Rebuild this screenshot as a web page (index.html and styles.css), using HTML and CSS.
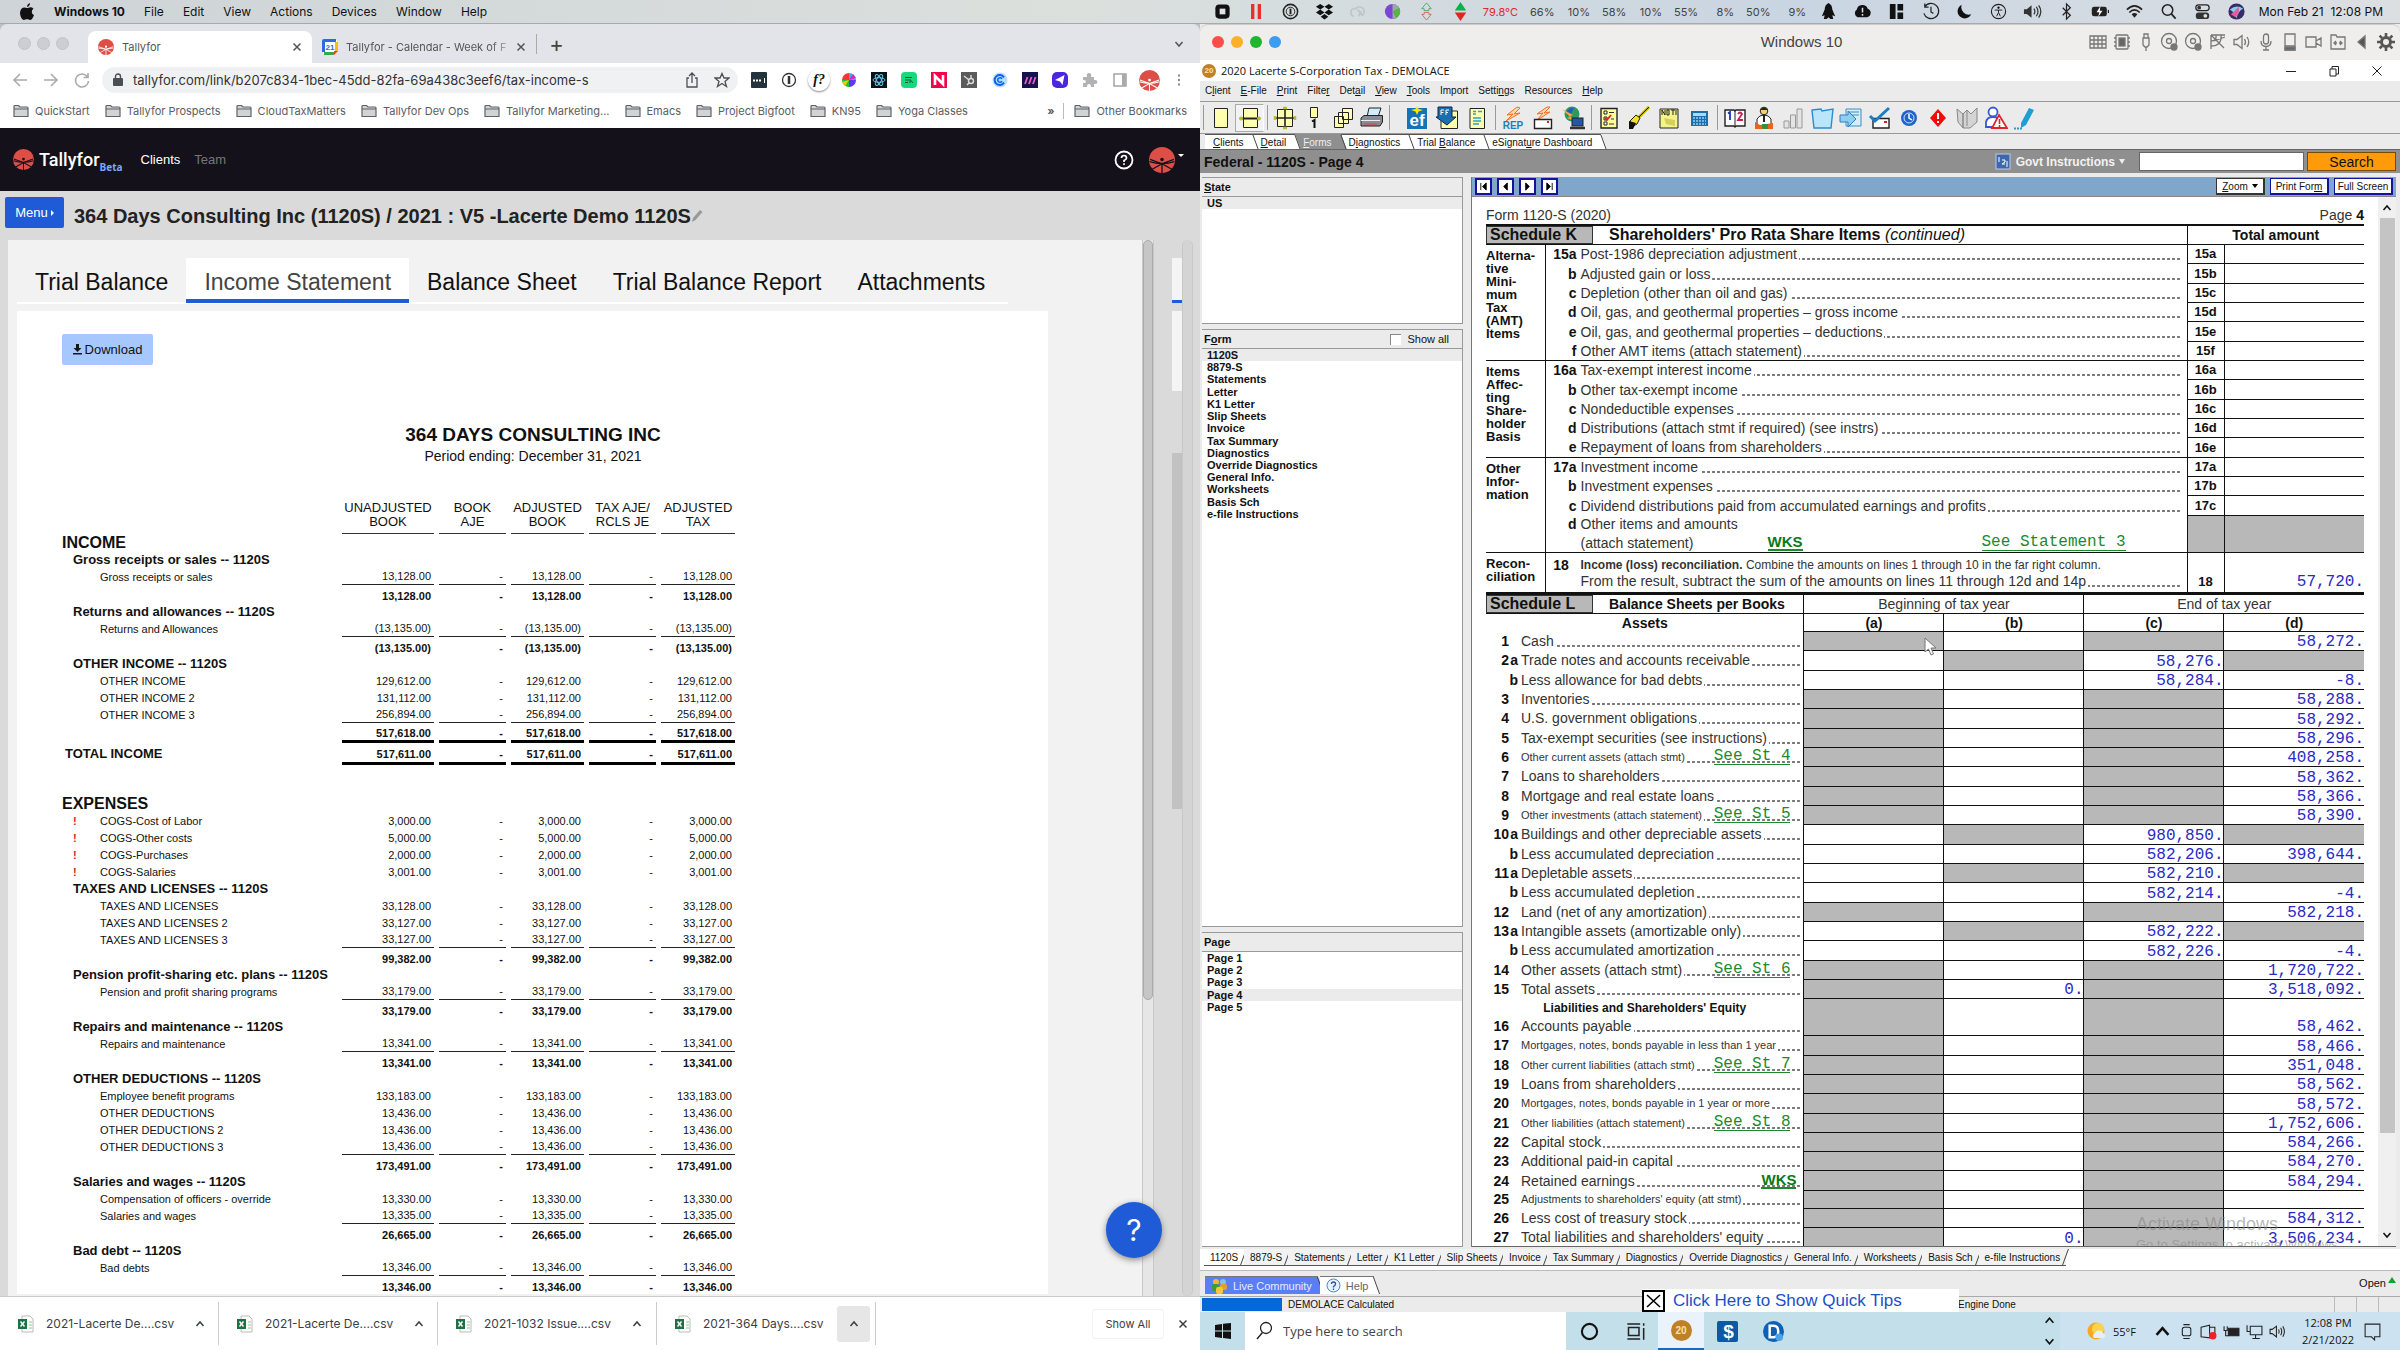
FILE: index.html
```html
<!DOCTYPE html>
<html lang="en">
<head>
<meta charset="utf-8">
<title>Tallyfor and Lacerte</title>
<link rel="stylesheet" href="styles.css">
</head>
<body>
<svg width="0" height="0" class="defs" aria-hidden="true">
  <symbol id="logo" viewBox="0 0 24 24"><circle cx="12" cy="12" r="12" fill="#dd4f46"/><circle cx="12" cy="11.500" r="1.600" fill="currentColor"/><path d="M.5 13.500Q12 17 23.500 13.500M3 20.500 12 15.500 21 20.500M12 15.500V24M1 11.500 12 15.500 23 11.500" fill="none" stroke="currentColor" stroke-width="1.200"/></symbol>
  <symbol id="folder" viewBox="0 0 16 14"><path d="M1 12.500V2.500Q1 1.500 2 1.500H5.500L7 3H14Q15 3 15 4V12.500ZM1 5H15" fill="#d2d3d5" stroke="#5f6368" stroke-width="1.200"/></symbol>
  <symbol id="x" viewBox="0 0 10 10"><path d="M1.500 1.500 8.500 8.500M8.500 1.500 1.500 8.500" stroke="currentColor" stroke-width="1.500" fill="none"/></symbol>
  <symbol id="up" viewBox="0 0 10 10"><path d="M1.500 7 5 3 8.500 7" stroke="currentColor" stroke-width="1.500" fill="none"/></symbol>
  <symbol id="down" viewBox="0 0 10 10"><path d="M1.500 3 5 7 8.500 3" stroke="currentColor" stroke-width="1.500" fill="none"/></symbol>
  <symbol id="csv" viewBox="0 0 16 18"><path d="M4 1H12L15 4V17H4Z" fill="#fff" stroke="#bbb"/><path d="M11 7h3M11 10h3M11 13h3" stroke="#8c8"/><rect y="4" width="9" height="10" fill="#1e7145"/><path d="M2.500 6.500 6.500 11.500M6.500 6.500 2.500 11.500" stroke="#fff" stroke-width="1.400"/></symbol>
  <symbol id="disc" viewBox="0 0 20 20"><circle cx="9" cy="9" r="7.500"/><circle cx="9" cy="9" r="2.500"/><circle cx="14" cy="15" r="3" fill="#777"/></symbol>
</svg>

<header class="macbar">
  <nav class="mac-menu">
    <svg width="16" height="18" viewBox="0 0 16 18"><path d="M11 0Q11 3 8 4 8 1 11 0M8 5C9 5 10 4 12 4.200 13 4.300 14 5 14.500 5.700 12 7.500 12.500 11 15 12 14 15 12.500 17 11 17 10 17 9.500 16.300 8 16.300S6 17 5 17C2.500 17 0 11 1.500 7.500 2.300 5.500 4 4.200 5.500 4.500 6.500 4.700 7.200 5 8 5" fill="#111"/></svg>
    <b>Windows 10</b><span>File</span><span>Edit</span><span>View</span><span>Actions</span><span>Devices</span><span>Window</span><span>Help</span>
  </nav>
  <div class="mac-status">
    <div class="mac-apps">
      <svg viewBox="0 0 20 20"><rect x="2.500" y="2.500" width="15" height="15" rx="4" fill="#111"/><rect x="7" y="7" width="6" height="6" fill="#dfe3e6"/></svg>
      <svg viewBox="0 0 20 20"><path d="M6 2V18M13 2V18" stroke="#e8302a" stroke-width="3.500"/></svg>
      <svg viewBox="0 0 20 20"><circle cx="10" cy="10" r="7.500" fill="none" stroke="#222" stroke-width="1.600"/><circle cx="10" cy="10" r="4.500" fill="none" stroke="#222"/><path d="M10 7V13" stroke="#222" stroke-width="2"/></svg>
      <svg viewBox="0 0 20 20"><path d="M5.500 2 10 5 5.500 8 1 5ZM14.500 2 19 5 14.500 8 10 5ZM5.500 8 10 11 5.500 14 1 11ZM14.500 8 19 11 14.500 14 10 11ZM10 12.500 14 15.500 10 18.500 6 15.500Z" fill="#111"/></svg>
      <svg viewBox="0 0 20 20"><path d="M5 15A4 4 0 1 1 7 7 5 5 0 1 1 14 14L9 8M10 15 13 10" fill="none" stroke="#bcc6cd" stroke-width="1.800"/></svg>
      <svg viewBox="0 0 20 20"><circle cx="10" cy="10" r="8" fill="#7b45d6"/><path d="M10 2A8 8 0 0 1 10 18Z" fill="#9ea6ac"/><path d="M10 10 17 6A8 8 0 0 1 14 17Z" fill="#57b447"/></svg>
      <svg viewBox="0 0 20 20"><path d="M10 1 15 7H12.500V9H7.500V7H5Z" fill="none" stroke="#55aa66"/><path d="M10 19 15 13H12.500V11H7.500V13H5Z" fill="none" stroke="#d66"/></svg>
      <svg viewBox="0 0 20 20"><path d="M10 0 16 9H4Z" fill="#0db14b"/><path d="M10 20 16 11H4Z" fill="#e5241d"/></svg>
    </div>
    <div class="mac-stats"><em>79.8°C</em><span>66%</span><span>10%</span><span>58%</span><span>10%</span><span>55%</span><span>8%</span><span>50%</span><span>9%</span></div>
    <div class="mac-sys">
      <svg viewBox="0 0 20 20"><path d="M10 1Q14 3 14 8L17 15 14 14 15 18H12L10 16 8 18H5L6 14 3 15 6 8Q6 3 10 1" fill="#111"/></svg>
      <svg viewBox="0 0 20 20"><path d="M5 16A4.500 4.500 0 0 1 4 8 6 6 0 0 1 15.500 7 4.700 4.700 0 0 1 15 16Z" fill="#111"/><path d="M10 6V11M10 12.500V14.500" stroke="#dde" stroke-width="1.600"/></svg>
      <svg viewBox="0 0 20 20"><path d="M3 2H9V18H3ZM11 2H17V9H11ZM11 11H17V18H11Z" fill="#111"/></svg>
      <svg viewBox="0 0 20 20"><path d="M4 5A8 8 0 1 1 3 12M4 1.500V5.500H8M10.500 5V10.500L13 12" fill="none" stroke="#222" stroke-width="1.300"/></svg>
      <svg viewBox="0 0 20 20"><path d="M7 3A7.500 7.500 0 1 0 17 13 8 8 0 0 1 7 3" fill="#111"/></svg>
      <svg viewBox="0 0 20 20"><circle cx="10" cy="10" r="7.500" fill="none" stroke="#222" stroke-width="1.200"/><circle cx="10" cy="6" r="1.200"/><path d="M6 8.500H14M10 8.500V11L8 15M10 11 12 15" stroke="#222" fill="none"/></svg>
      <svg viewBox="0 0 20 20"><path d="M1 7.500H4L9 3.500V16.500L4 12.500H1Z" fill="#333"/><path d="M11.500 7Q13.500 10 11.500 13M14 5Q17.500 10 14 15M16.500 3.500Q21 10 16.500 16.500" fill="none" stroke="#333" stroke-width="1.300"/></svg>
      <svg viewBox="0 0 20 20"><path d="M6 6 14 14 10 18V2L14 6 6 14" fill="none" stroke="#222" stroke-width="1.300"/></svg>
      <svg viewBox="0 0 24 20"><rect x="1" y="4" width="19" height="12" rx="3" fill="#222"/><path d="M22 8V12" stroke="#222" stroke-width="1.500"/><path d="M12 3 7 11H10.500L9 17 14.500 9H11Z" fill="#fff"/></svg>
      <svg viewBox="0 0 20 20"><path d="M2 8Q10 0 18 8M4.500 11Q10 5.500 15.500 11" fill="none" stroke="#222" stroke-width="1.700"/><path d="M7 13Q10 10 13 13L10 16.500Z" fill="#222"/></svg>
      <svg viewBox="0 0 20 20"><circle cx="9" cy="8.500" r="5.500" fill="none" stroke="#222" stroke-width="1.600"/><path d="M13 12.500 17.500 17.500" stroke="#222" stroke-width="1.800"/></svg>
      <svg viewBox="0 0 20 20"><rect x="3" y="3" width="14" height="6" rx="3" fill="none" stroke="#222" stroke-width="1.300"/><rect x="3" y="11" width="14" height="7" rx="3" fill="#333"/><circle cx="13" cy="14.500" r="2" fill="#ddd"/><circle cx="6.500" cy="6" r="2" fill="#333"/></svg>
      <svg viewBox="0 0 20 20"><circle cx="10" cy="10" r="8.500" fill="#3b2a63"/><path d="M3 8Q10 2 17 7 12 9 10 17 7 10 3 8" fill="#7fd0ee"/><path d="M4 13Q9 9 12 5 14 12 9 16Z" fill="#e85a9b"/></svg>
    </div>
    <time>Mon Feb 21&nbsp; 12:08 PM</time>
  </div>
</header>

<main class="desk">
<section class="chrome">
  <div class="tabstrip">
    <span class="light"></span><span class="light"></span><span class="light"></span>
    <div class="btab on"><svg class="fav wl" width="16" height="16"><use href="#logo"/></svg><span>Tallyfor</span><svg width="10" height="10"><use href="#x"/></svg></div>
    <div class="btab"><svg class="fav" width="16" height="16" viewBox="0 0 16 16"><path d="M1 1H15V12L12 15H1Z" fill="#fff"/><path d="M0 2Q0 0 2 0H14V3H3V13H0Z" fill="#2b6de0"/><path d="M13 3H16V12H13Z" fill="#fbbc04"/><path d="M2 13H12V16H2Z" fill="#34a853"/><path d="M12 12H16L12 16Z" fill="#ea4335"/><text x="8" y="11" text-anchor="middle" class="cal-day">21</text></svg><span class="fade">Tallyfor - Calendar - Week of F</span><svg width="10" height="10"><use href="#x"/></svg></div>
    <button class="newtab" aria-label="New tab">+</button>
    <svg class="tabsearch" width="10" height="10"><use href="#down"/></svg>
  </div>
  <div class="urlrow">
    <div class="navs">
      <svg viewBox="0 0 18 18"><path d="M16 9H3M9 3 3 9 9 15" fill="none" stroke="#a9abae" stroke-width="1.600"/></svg>
      <svg viewBox="0 0 18 18"><path d="M2 9H15M9 3 15 9 9 15" fill="none" stroke="#a9abae" stroke-width="1.600"/></svg>
      <svg viewBox="0 0 18 18"><path d="M14.500 6A6.500 6.500 0 1 0 15.500 10M15 2V6.500H10.500" fill="none" stroke="#a9abae" stroke-width="1.600"/></svg>
    </div>
    <div class="omni">
      <svg width="10" height="14" viewBox="0 0 10 14"><rect y="5" width="10" height="8" rx="1" fill="#4b4f54"/><path d="M2.500 5V3.500A2.500 2.500 0 0 1 7.500 3.500V5" fill="none" stroke="#4b4f54" stroke-width="1.400"/></svg>
      <input aria-label="Address" value="tallyfor.com/link/b207c834-1bec-45dd-82fa-69a438c3eef6/tax-income-s">
      <svg width="16" height="16" viewBox="0 0 16 16"><path d="M5 6H3V15H13V6H11M8 11V1.500M5 4 8 1 11 4" fill="none" stroke="#4b4f54" stroke-width="1.300"/></svg>
      <svg width="16" height="16" viewBox="0 0 16 16"><path d="M8 1.500 10 6H15L11 9.500 12.500 14.500 8 11.500 3.500 14.500 5 9.500 1 6H6Z" fill="none" stroke="#4b4f54" stroke-width="1.300"/></svg>
    </div>
    <div class="exts">
      <svg viewBox="0 0 16 16"><rect width="16" height="16" rx="1" fill="#22333c"/><path d="M2 8.500H10.500" stroke="#fff" stroke-width="2" stroke-dasharray="2 1"/><path d="M13.500 6V11" stroke="#fff"/></svg>
      <svg viewBox="0 0 16 16"><circle cx="8" cy="8" r="6.500" fill="none" stroke="#333" stroke-width="1.300"/><path d="M8 4V12" stroke="#333" stroke-width="2.500"/></svg>
      <i>f?</i>
      <svg viewBox="0 0 16 16"><path d="M8 8V1A7 7 0 0 1 15 8Z" fill="#2bb5f0"/><path d="M8 8H15A7 7 0 0 1 8 15Z" fill="#5a3df0"/><path d="M8 8V15A7 7 0 0 1 1 8Z" fill="#19c531"/><path d="M8 8H1A7 7 0 0 1 8 1Z" fill="#f33"/><path d="M8 8 4 14 1 10Z" fill="#f7c700"/><path d="M8 8 12 2 15 6Z" fill="#e021c8"/></svg>
      <svg viewBox="0 0 16 16"><rect width="16" height="16" fill="#0d1117"/><g fill="none" stroke="#5fc8ea"><ellipse cx="8" cy="8" rx="6" ry="2.300"/><ellipse cx="8" cy="8" rx="6" ry="2.300" transform="rotate(60 8 8)"/><ellipse cx="8" cy="8" rx="6" ry="2.300" transform="rotate(120 8 8)"/></g></svg>
      <svg viewBox="0 0 16 16"><rect width="16" height="16" rx="4" fill="#19d87c"/><path d="M4 5.500H11M4 8H8M4 10.500H7M9 7.500V11M9 7.500 12 11" stroke="#0a5b3a" fill="none"/></svg>
      <svg viewBox="0 0 16 16"><rect width="16" height="16" fill="#f2044c"/><path d="M4 13V4L12 12V3" fill="none" stroke="#fff" stroke-width="2.600"/></svg>
      <svg viewBox="0 0 16 16"><rect width="16" height="16" fill="#5b5b5b"/><circle cx="10" cy="9" r="2.500" fill="none" stroke="#ddd" stroke-width="1.400"/><path d="M10 6V3M8 8 3 4M8 11 6 13" stroke="#ddd" stroke-width="1.400"/></svg>
      <svg viewBox="0 0 16 16"><circle cx="8" cy="8" r="7.500" fill="#b9dcff"/><path d="M12 5.500A5 5 0 1 0 12 10.500" fill="none" stroke="#0a66f0" stroke-width="2"/><path d="M10 6.800A2.300 2.300 0 1 0 10 9.200" fill="none" stroke="#0a66f0" stroke-width="1.600"/></svg>
      <svg viewBox="0 0 16 16"><rect width="16" height="16" fill="#17124a"/><path d="M3 12 5.500 5M7 12 9.500 5M11 12 13.500 5" stroke="#f05ac8" stroke-width="1.800"/></svg>
      <svg viewBox="0 0 16 16"><rect width="16" height="16" rx="5" fill="#4b25e0"/><path d="M12.500 3 3 8 8 9.500 10.500 13Z" fill="#fff"/></svg>
      <svg viewBox="0 0 16 16"><path d="M1 5H5Q4 1 7 1T9 5H12V8Q15.500 7.500 15.500 10T12 12V15H9Q9 12 7 12T5 15H1V11Q4 11.500 4 9.500T1 8Z" fill="#b0b2b5"/></svg>
      <svg viewBox="0 0 16 16"><rect x="2" y="2" width="12" height="12" fill="#fff" stroke="#aaa" stroke-width="1.600"/><path d="M10 2H14V14H10Z" fill="#aaa"/></svg>
      <svg class="me wl" viewBox="0 0 24 24"><use href="#logo"/></svg>
      <svg viewBox="0 0 16 16"><path d="M8 2.500V4.500M8 7V9M8 11.500V13.500" stroke="#888" stroke-width="2"/></svg>
    </div>
  </div>
  <nav class="marks">
    <a href="#"><svg><use href="#folder"/></svg>QuickStart</a><a href="#"><svg><use href="#folder"/></svg>Tallyfor Prospects</a><a href="#"><svg><use href="#folder"/></svg>CloudTaxMatters</a><a href="#"><svg><use href="#folder"/></svg>Tallyfor Dev Ops</a><a href="#"><svg><use href="#folder"/></svg>Tallyfor Marketing...</a><a href="#"><svg><use href="#folder"/></svg>Emacs</a><a href="#"><svg><use href="#folder"/></svg>Project Bigfoot</a><a href="#"><svg><use href="#folder"/></svg>KN95</a><a href="#"><svg><use href="#folder"/></svg>Yoga Classes</a>
    <b>»</b><a class="other" href="#"><svg><use href="#folder"/></svg>Other Bookmarks</a>
  </nav>

  <div class="apphead">
    <svg width="21" height="21"><use href="#logo"/></svg>
    <strong>Tallyfor</strong><sub>Beta</sub>
    <a class="lit" href="#">Clients</a><a href="#">Team</a>
    <svg class="q" width="20" height="20" viewBox="0 0 20 20"><circle cx="10" cy="10" r="8.500" fill="none" stroke="#fff" stroke-width="1.800"/><path d="M7.500 8Q7.500 5.500 10 5.500T12.500 8Q12.500 9.500 10 10.500V12M10 13.300V15" fill="none" stroke="#fff" stroke-width="1.700"/></svg>
    <svg width="26" height="26"><use href="#logo"/></svg><i class="caret"></i>
  </div>

  <div class="titlebar">
    <button class="menu">Menu<i></i></button>
    <h1>364 Days Consulting Inc (1120S) / 2021 : V5 -Lacerte Demo 1120S</h1>
    <svg width="12" height="14" viewBox="0 0 12 14"><path d="M1 13 2 9 9 1 11.500 3 4.500 11Z" fill="#999"/></svg>
  </div>

  <div class="appbody">
    <div class="panel">
      <nav class="ptabs"><a href="#">Trial Balance</a><a href="#" class="on">Income Statement</a><a href="#">Balance Sheet</a><a href="#">Trial Balance Report</a><a href="#">Attachments</a></nav>
      <div class="paper">
        <button class="download"><svg width="9" height="11" viewBox="0 0 9 11"><path d="M3 0H6V4H8.500L4.500 8 .5 4H3ZM0 9H9V10.500H0Z" fill="#161616"/></svg>Download</button>
        <h2>364 DAYS CONSULTING INC</h2>
        <p>Period ending: December 31, 2021</p>
        <table class="income">
          <colgroup><col class="c0"><col class="c1"><col class="c2"><col class="c3"><col class="c2"><col class="c4"></colgroup>
          <thead><tr><td></td><th>UNADJUSTED<br>BOOK</th><th>BOOK<br>AJE</th><th>ADJUSTED<br>BOOK</th><th>TAX AJE/<br>RCLS JE</th><th>ADJUSTED<br>TAX</th></tr></thead>
          <tbody>
          <tr class="big"><th colspan="6">INCOME</th></tr>
          <tr class="h"><th colspan="6">Gross receipts or sales -- 1120S</th></tr>
          <tr class="e"><th>Gross receipts or sales</th><td>13,128.00</td><td>-</td><td>13,128.00</td><td>-</td><td>13,128.00</td></tr>
          <tr class="s"><th></th><td>13,128.00</td><td>-</td><td>13,128.00</td><td>-</td><td>13,128.00</td></tr>
          <tr class="h"><th colspan="6">Returns and allowances -- 1120S</th></tr>
          <tr class="e"><th>Returns and Allowances</th><td>(13,135.00)</td><td>-</td><td>(13,135.00)</td><td>-</td><td>(13,135.00)</td></tr>
          <tr class="s"><th></th><td>(13,135.00)</td><td>-</td><td>(13,135.00)</td><td>-</td><td>(13,135.00)</td></tr>
          <tr class="h"><th colspan="6">OTHER INCOME -- 1120S</th></tr>
          <tr><th>OTHER INCOME</th><td>129,612.00</td><td>-</td><td>129,612.00</td><td>-</td><td>129,612.00</td></tr>
          <tr><th>OTHER INCOME 2</th><td>131,112.00</td><td>-</td><td>131,112.00</td><td>-</td><td>131,112.00</td></tr>
          <tr class="e"><th>OTHER INCOME 3</th><td>256,894.00</td><td>-</td><td>256,894.00</td><td>-</td><td>256,894.00</td></tr>
          <tr class="s dbl"><th></th><td>517,618.00</td><td>-</td><td>517,618.00</td><td>-</td><td>517,618.00</td></tr>
          <tr class="s dbl tot"><th>TOTAL INCOME</th><td>517,611.00</td><td>-</td><td>517,611.00</td><td>-</td><td>517,611.00</td></tr>
          <tr class="gap"><td colspan="6"></td></tr>
          <tr class="big"><th colspan="6">EXPENSES</th></tr>
          <tr class="w"><th>COGS-Cost of Labor</th><td>3,000.00</td><td>-</td><td>3,000.00</td><td>-</td><td>3,000.00</td></tr>
          <tr class="w"><th>COGS-Other costs</th><td>5,000.00</td><td>-</td><td>5,000.00</td><td>-</td><td>5,000.00</td></tr>
          <tr class="w"><th>COGS-Purchases</th><td>2,000.00</td><td>-</td><td>2,000.00</td><td>-</td><td>2,000.00</td></tr>
          <tr class="w"><th>COGS-Salaries</th><td>3,001.00</td><td>-</td><td>3,001.00</td><td>-</td><td>3,001.00</td></tr>
          <tr class="h"><th colspan="6">TAXES AND LICENSES -- 1120S</th></tr>
          <tr><th>TAXES AND LICENSES</th><td>33,128.00</td><td>-</td><td>33,128.00</td><td>-</td><td>33,128.00</td></tr>
          <tr><th>TAXES AND LICENSES 2</th><td>33,127.00</td><td>-</td><td>33,127.00</td><td>-</td><td>33,127.00</td></tr>
          <tr class="e"><th>TAXES AND LICENSES 3</th><td>33,127.00</td><td>-</td><td>33,127.00</td><td>-</td><td>33,127.00</td></tr>
          <tr class="s"><th></th><td>99,382.00</td><td>-</td><td>99,382.00</td><td>-</td><td>99,382.00</td></tr>
          <tr class="h"><th colspan="6">Pension profit-sharing etc. plans -- 1120S</th></tr>
          <tr class="e"><th>Pension and profit sharing programs</th><td>33,179.00</td><td>-</td><td>33,179.00</td><td>-</td><td>33,179.00</td></tr>
          <tr class="s"><th></th><td>33,179.00</td><td>-</td><td>33,179.00</td><td>-</td><td>33,179.00</td></tr>
          <tr class="h"><th colspan="6">Repairs and maintenance -- 1120S</th></tr>
          <tr class="e"><th>Repairs and maintenance</th><td>13,341.00</td><td>-</td><td>13,341.00</td><td>-</td><td>13,341.00</td></tr>
          <tr class="s"><th></th><td>13,341.00</td><td>-</td><td>13,341.00</td><td>-</td><td>13,341.00</td></tr>
          <tr class="h"><th colspan="6">OTHER DEDUCTIONS -- 1120S</th></tr>
          <tr><th>Employee benefit programs</th><td>133,183.00</td><td>-</td><td>133,183.00</td><td>-</td><td>133,183.00</td></tr>
          <tr><th>OTHER DEDUCTIONS</th><td>13,436.00</td><td>-</td><td>13,436.00</td><td>-</td><td>13,436.00</td></tr>
          <tr><th>OTHER DEDUCTIONS 2</th><td>13,436.00</td><td>-</td><td>13,436.00</td><td>-</td><td>13,436.00</td></tr>
          <tr class="e"><th>OTHER DEDUCTIONS 3</th><td>13,436.00</td><td>-</td><td>13,436.00</td><td>-</td><td>13,436.00</td></tr>
          <tr class="s"><th></th><td>173,491.00</td><td>-</td><td>173,491.00</td><td>-</td><td>173,491.00</td></tr>
          <tr class="h"><th colspan="6">Salaries and wages -- 1120S</th></tr>
          <tr><th>Compensation of officers - override</th><td>13,330.00</td><td>-</td><td>13,330.00</td><td>-</td><td>13,330.00</td></tr>
          <tr class="e"><th>Salaries and wages</th><td>13,335.00</td><td>-</td><td>13,335.00</td><td>-</td><td>13,335.00</td></tr>
          <tr class="s"><th></th><td>26,665.00</td><td>-</td><td>26,665.00</td><td>-</td><td>26,665.00</td></tr>
          <tr class="h"><th colspan="6">Bad debt -- 1120S</th></tr>
          <tr class="e"><th>Bad debts</th><td>13,346.00</td><td>-</td><td>13,346.00</td><td>-</td><td>13,346.00</td></tr>
          <tr class="s"><th></th><td>13,346.00</td><td>-</td><td>13,346.00</td><td>-</td><td>13,346.00</td></tr>
          </tbody>
        </table>
      </div>
    </div>
    <div class="bar"><i></i></div>
    <div class="peek"><b></b><span></span><u></u></div>
    <div class="bar slim"></div>
    <button class="help" aria-label="Help">?</button>
  </div>

  <footer class="shelf">
    <div><svg width="16" height="18"><use href="#csv"/></svg><span>2021-Lacerte De....csv</span><button aria-label="Options"><svg width="10" height="10"><use href="#up"/></svg></button></div>
    <div><svg width="16" height="18"><use href="#csv"/></svg><span>2021-Lacerte De....csv</span><button aria-label="Options"><svg width="10" height="10"><use href="#up"/></svg></button></div>
    <div><svg width="16" height="18"><use href="#csv"/></svg><span>2021-1032 Issue....csv</span><button aria-label="Options"><svg width="10" height="10"><use href="#up"/></svg></button></div>
    <div><svg width="16" height="18"><use href="#csv"/></svg><span>2021-364 Days....csv</span><button class="on" aria-label="Options"><svg width="10" height="10"><use href="#up"/></svg></button></div>
    <button class="all">Show All</button><svg width="10" height="10"><use href="#x"/></svg>
  </footer>
</section>

<section class="vm">
  <div class="vmtitle">
    <i class="r"></i><i class="y"></i><i class="g"></i><i class="b"></i>
    <span>Windows 10</span>
    <div class="vmicons">
      <svg viewBox="0 0 20 20"><path d="M2 4H18V16H2ZM2 8H18M2 12H18M6 4V16M10 4V16M14 4V16"/></svg>
      <svg viewBox="0 0 20 20"><rect x="4" y="3" width="12" height="14" rx="1"/><rect x="7" y="6" width="6" height="8" fill="#666"/><path d="M2 6H4M2 10H4M2 14H4M16 6H18M16 10H18M16 14H18"/></svg>
      <svg viewBox="0 0 20 20"><path d="M8 2H12V6H8ZM7 6H13V13L11 15H9L7 13ZM10 15V19"/></svg>
      <svg><use href="#disc"/></svg><svg><use href="#disc"/></svg>
      <svg viewBox="0 0 20 20"><path d="M3 3H17M3 3V17M3 3 16 16M8 3Q9 9 3 9M13 3Q14 14 3 14M17 5 6 9"/></svg>
      <svg viewBox="0 0 20 20"><path d="M2 7.500H5L10 3.500V16.500L5 12.500H2ZM12.500 7Q14.500 10 12.500 13M15 5Q18.500 10 15 15"/></svg>
      <svg viewBox="0 0 20 20"><rect x="7.500" y="2" width="5" height="10" rx="2.500"/><path d="M5 9Q5 14.500 10 14.500T15 9M10 15V18M7 18H13"/></svg>
      <svg viewBox="0 0 20 20"><path d="M5 2H15V18H5ZM5 14H15"/><path d="M5 15H15V18H5Z" fill="#666"/></svg>
      <svg viewBox="0 0 20 20"><path d="M2 5H12V15H2ZM12 9 17 6V14L12 11"/></svg>
      <svg viewBox="0 0 20 20"><path d="M3 17V3H8L9 5H17V17ZM6 11H9M11 11H14M8 9 6 11 8 13M12 9 14 11 12 13"/></svg>
      <svg viewBox="0 0 20 20"><path d="M13 4V16L6 10Z" fill="#555"/></svg>
      <svg viewBox="0 0 20 20"><circle cx="10" cy="10" r="4.500" stroke-width="3" stroke="#555"/><path d="M10 1V5M10 15V19M1 10H5M15 10H19M3.600 3.600 6 6M14 14 16.400 16.400M3.600 16.400 6 14M14 6 16.400 3.600" stroke-width="2.600" stroke="#555"/></svg>
    </div>
  </div>
  <div class="wtitle">
    <b class="coin">20</b><span>2020 Lacerte S-Corporation Tax - DEMOLACE</span>
    <div><svg viewBox="0 0 12 12"><path d="M1 6.500H11"/></svg><svg viewBox="0 0 12 12"><path d="M2 4H8V11H2ZM4 4V1.500H10.500V9H8"/></svg><svg viewBox="0 0 12 12"><path d="M1.500 1.500 10.500 10.500M10.500 1.500 1.500 10.500"/></svg></div>
  </div>
  <nav class="wmenu"><a href="#">C<u>l</u>ient</a><a href="#"><u>E</u>-File</a><a href="#"><u>P</u>rint</a><a href="#">Filte<u>r</u></a><a href="#">Det<u>a</u>il</a><a href="#"><u>V</u>iew</a><a href="#"><u>T</u>ools</a><a href="#">Import</a><a href="#">Setti<u>n</u>gs</a><a href="#">Resources</a><a href="#"><u>H</u>elp</a></nav>
  <div class="wtools">
    <span></span>
    <button aria-label="Page"><svg viewBox="0 0 24 24"><path d="M5.500 2.500H18.500V21.500H5.500Z" fill="#ffffb0" stroke="#222"/></svg></button>
    <button class="on" aria-label="Split"><svg viewBox="0 0 24 24"><path d="M5.500 2.500H19.500V21.500H5.500Z" fill="#ffffb0" stroke="#222"/><path d="M3 12.500H22" stroke="#222" stroke-width="2"/><circle cx="3" cy="12.500" r="2" fill="#bb3"/><circle cx="21" cy="12.500" r="2" fill="#bb3"/></svg></button>
    <span></span>
    <button aria-label="Quad"><svg viewBox="0 0 24 24"><path d="M4.500 3.500H19.500V20.500H4.500Z" fill="#ffffb0" stroke="#222"/><path d="M2 12H22M12 2V22" stroke="#222" stroke-width="1.600"/><path d="M10 2H14M10 22H14M2 10V14M22 10V14" stroke="#bb3" stroke-width="2.500"/></svg></button>
    <button aria-label="Single"><svg viewBox="0 0 24 24"><path d="M8.500 1.500H15.500V11.500H8.500Z" fill="#ffffb0" stroke="#222"/><path d="M10 15.500 12.500 14V22" fill="none" stroke="#111" stroke-width="2"/></svg></button>
    <button aria-label="Stack"><svg viewBox="0 0 24 24" fill="#ffffb0" stroke="#222"><path d="M11.500 2.500H21.500V13.500H11.500ZM7.500 6.500H17.500V17.500H7.500ZM3.500 10.500H12.500V21.500H3.500Z"/></svg></button>
    <button aria-label="Print"><svg viewBox="0 0 24 24"><path d="M7 11 9 2H21L18 11Z" fill="#cfeefc" stroke="#222"/><path d="M1 12 4 9.500H22.500V16L20 20H1Z" fill="#8b8b98" stroke="#222"/><path d="M1 14.500H20" stroke="#eee"/><path d="M4 18H17" stroke="#c55" stroke-width="1.500"/></svg></button>
    <span class="wide"></span>
    <button aria-label="E-file"><svg viewBox="0 0 24 24"><rect x="2" y="2" width="20" height="21" fill="#1473b8"/><path d="M12 0 13.500 3 18 4 13.500 5.500 12 9 10.500 5.500 6 4 10.500 3Z" fill="#ffe600"/><text x="12" y="20" text-anchor="middle" class="ef">ef</text></svg></button>
    <button aria-label="EF import"><svg viewBox="0 0 24 24"><path d="M12 5H22.500V22.500H6V15" fill="#ffffb0" stroke="#222"/><path d="M3 1H17V11H21L12 19 1 11H3Z" fill="#1b6fae" stroke="#124"/><path d="M6 4H9M6 4V9M6 6.500H8.500M11 4H14M11 4V9M11 6.500H13" stroke="#fff" fill="none"/></svg></button>
    <button aria-label="EF list"><svg viewBox="0 0 24 24"><path d="M5 2.500H19.500V22.500H5Z" fill="#ffffb0" stroke="#222"/><path d="M8 5.500H11M8 8H11M13 5.500H17M8 12H16M8 15H16M8 18H14" stroke="#2aa2cc" stroke-width="1.600"/></svg></button>
    <span></span>
    <button aria-label="Rep"><svg viewBox="0 0 24 24"><path d="M16 1 6 9 12 8 5 15 19 7 13 8 19 2Z" fill="#ffd9a8" stroke="#f0702a"/><text x="12" y="23" text-anchor="middle" class="rep">REP</text></svg></button>
    <button aria-label="Send"><svg viewBox="0 0 24 24"><path d="M16 1 6 8 12 7 6 14 19 6 13 7 19 1Z" fill="#ffd9a8" stroke="#f0702a"/><path d="M3.500 13.500H20.500V22.500H3.500Z" fill="#fff" stroke="#222" stroke-width="1.400"/><path d="M16 16H18" stroke="#c22" stroke-width="2"/></svg></button>
    <button aria-label="Online"><svg viewBox="0 0 24 24"><circle cx="11" cy="8" r="7.500" fill="#2c9a5e"/><path d="M6 5Q9 1 13 2L10 8 6 10Z" fill="#1c62b4"/><path d="M1 3 12 9 9 10 16 16 6 12 9 11Z" fill="#ffa43a"/><rect x="11" y="12" width="11" height="8" fill="#2456a8" stroke="#222"/><path d="M9 22H24" stroke="#333" stroke-width="2.500"/></svg></button>
    <span></span>
    <button aria-label="Checklist"><svg viewBox="0 0 24 24"><path d="M4 2.500H20V22H4Z" fill="#ffff9a" stroke="#222" stroke-width="1.400"/><path d="M7 5H10V8H7ZM7 11H10V14H7ZM7 16H10V19H7Z" fill="#fff" stroke="#222"/><path d="M8 12 10 14 14 9" stroke="#d22" fill="none" stroke-width="1.800"/><path d="M12 6.500H17M14 13H17M12 18H17" stroke="#333"/></svg></button>
    <button aria-label="Sign"><svg viewBox="0 0 24 24"><path d="M22 1 10 13" stroke="#c8b400" stroke-width="3"/><path d="M22 1 10 13" stroke="#222"/><path d="M3 22V15L9 9 13 12 10 18Z" fill="#f4e02a" stroke="#222"/><path d="M2 15 9 17 6 23H2Z" fill="#111"/></svg></button>
    <button aria-label="Notes"><svg viewBox="0 0 24 24"><path d="M3 3H21V22H3Z" fill="#f4f48a" stroke="#222"/><path d="M5 9V4L8 9V4M10 4H12V9H10ZM14 4H18M16 4V9M19 4V9" stroke="#222" fill="none"/><path d="M7 12 18 14V20L9 18Z" fill="#d6cf5a"/></svg></button>
    <button aria-label="Calculator"><svg viewBox="0 0 24 24"><rect x="4" y="5" width="17" height="15" fill="#1c6fa8"/><rect x="6" y="7" width="13" height="3" fill="#9fe0ff"/><path d="M6 12H19M6 15H19M6 18H19" stroke="#8fd0f4" stroke-dasharray="2 1" stroke-width="1.500"/></svg></button>
    <span class="last"></span>
    <button aria-label="Compare"><svg viewBox="0 0 24 24"><path d="M2 4H11L12 5 13 4H22V20H13L12 21 11 20H2Z" fill="#fff" stroke="#222" stroke-width="1.400"/><path d="M12 5V20" stroke="#222"/><path d="M5 7.500 7 6V14" fill="none" stroke="#1736b8" stroke-width="1.800"/><path d="M15 8Q17 5 19 8L15 14H20" fill="none" stroke="#c81e50" stroke-width="1.800"/></svg></button>
    <button aria-label="Advisor"><svg viewBox="0 0 24 24"><circle cx="12" cy="5" r="3.800" fill="#f3cf7a" stroke="#222"/><path d="M8 4Q12-1 16 4Z" fill="#222"/><path d="M5 22V13Q7 9 12 9T19 13V22Z" fill="#fff" stroke="#222"/><path d="M12 9V16" stroke="#222" stroke-width="2"/><path d="M3 16 8 19 21 17V23H3Z" fill="#e8641f"/><path d="M10 18H16V23H10Z" fill="#3a8f3a"/></svg></button>
    <button aria-label="Chart"><svg viewBox="0 0 24 24" fill="#e4e4e4" stroke="#999"><path d="M3 15H8V22H3ZM9.500 9H14.500V22H9.500ZM16 3H21V22H16Z"/></svg></button>
    <button aria-label="Folder"><svg viewBox="0 0 24 24"><path d="M2 4 11 3 12 5 23 3 21 22H4Z" fill="#b9e6fb" stroke="#2f8cc8" stroke-width="1.400"/></svg></button>
    <button aria-label="Move"><svg viewBox="0 0 24 24"><path d="M7 3H22V20H7Z" fill="#d6ecfa" stroke="#3c8ec4"/><path d="M10 6H20M10 9H20" stroke="#3c8ec4"/><path d="M1 9H9V5L17 13 9 21V16H1Z" fill="#8fcdf2" stroke="#2f7fc0"/></svg></button>
    <button aria-label="Mail check"><svg viewBox="0 0 24 24"><path d="M5 12.500H21V22H5Z" fill="#fff" stroke="#222" stroke-width="1.400"/><path d="M16 16H19" stroke="#c22" stroke-width="2"/><path d="M2 10 7 15 21 2" fill="none" stroke="#1b7fc4" stroke-width="3"/></svg></button>
    <button aria-label="History"><svg viewBox="0 0 24 24"><circle cx="12" cy="12" r="8" fill="#1f64c8"/><circle cx="12" cy="12" r="5" fill="none" stroke="#cfe2ff"/><path d="M12 8V12L15 14" stroke="#fff" fill="none" stroke-width="1.500"/></svg></button>
    <button aria-label="Alert"><svg viewBox="0 0 24 24"><path d="M12 3 20 12 12 21 4 12Z" fill="#f30b0b"/><path d="M12 7V13M12 15V17" stroke="#fff" stroke-width="2"/></svg></button>
    <button aria-label="Letter"><svg viewBox="0 0 24 24" fill="#d4d4d4" stroke="#888"><path d="M2 3 8 8V22L3 16ZM8 8 12 4 16 8 22 2V16L15 22H8ZM12 4V20"/></svg></button>
    <button aria-label="User alert"><svg viewBox="0 0 24 24" fill="#fff"><circle cx="9" cy="6" r="4.500" stroke="#3a56d8" stroke-width="1.800"/><path d="M2 21V16Q3 11 9 11T15 15V21Z" stroke="#3a56d8" stroke-width="1.800"/><path d="M15 9 23 22H8Z" stroke="#e0252a" stroke-width="1.800"/><path d="M15.500 13V18M15.500 19V21" stroke="#e0252a" stroke-width="1.600"/></svg></button>
    <button aria-label="Edit"><svg viewBox="0 0 24 24"><path d="M8 17 16 2 21 4 13 19 8 22Z" fill="#1d9fd6"/><path d="M1 22.500H9" stroke="#1d9fd6" stroke-width="2" stroke-dasharray="2 1"/></svg></button>
  </div>
  <nav class="wtabs"><a href="#"><u>C</u>lients</a><a href="#"><u>D</u>etail</a><a href="#" class="on"><u>F</u>orms</a><a href="#">D<u>i</u>agnostics</a><a href="#">Trial <u>B</u>alance</a><a href="#">eSignat<u>u</u>re Dashboard</a></nav>
  <div class="band">
    <h3>Federal - 1120S - Page 4</h3>
    <svg width="16" height="17" viewBox="0 0 16 17"><rect x="1" y="1" width="14" height="15" fill="#3f68ac" stroke="#b9cbe8"/><path d="M4 4V9M7 7H10V9L7 11H10M12 8V14" stroke="#fff" fill="none"/></svg>
    <b>Govt Instructions</b><i></i>
    <input aria-label="Search forms"><button>Search</button>
  </div>
  <div class="work">
    <aside>
      <section class="state"><h4><u>S</u>tate</h4><ul><li class="on">US</li></ul></section>
      <section class="forms"><h4>F<u>o</u>rm <label><input type="checkbox">Show all</label></h4>
        <ul><li class="on">1120S</li><li>8879-S</li><li>Statements</li><li>Letter</li><li>K1 Letter</li><li>Slip Sheets</li><li>Invoice</li><li>Tax Summary</li><li>Diagnostics</li><li>Override Diagnostics</li><li>General Info.</li><li>Worksheets</li><li>Basis Sch</li><li>e-file Instructions</li></ul></section>
      <section class="pages"><h4>Page</h4><ul><li>Page 1</li><li>Page 2</li><li>Page 3</li><li class="on">Page 4</li><li>Page 5</li></ul></section>
    </aside>
    <div class="viewer">
      <div class="vbar">
        <button aria-label="First"><svg viewBox="0 0 10 10"><path d="M2 1V9M8 1V9L4 5Z"/></svg></button><button aria-label="Previous"><svg viewBox="0 0 10 10"><path d="M7 1V9L3 5Z"/></svg></button><button aria-label="Next"><svg viewBox="0 0 10 10"><path d="M3 1V9L7 5Z"/></svg></button><button aria-label="Last"><svg viewBox="0 0 10 10"><path d="M8 1V9M2 1V9L6 5Z"/></svg></button>
        <button class="txt first"><u>Z</u>oom<i></i></button><button class="txt">Print For<u>m</u></button><button class="txt">Full Screen</button>
      </div>
      <div class="vscroll">
        <div class="sheet">
          <div class="formno"><span>Form 1120-S (2020)</span><span>Page <b>4</b></span></div>
          <table class="sk">
            <colgroup><col class="k1"><col><col class="k3"><col class="k4"></colgroup>
            <thead><tr><th colspan="2"><div><b class="tag">Schedule K</b><span>Shareholders' Pro Rata Share Items <i>(continued)</i></span></div></th><th colspan="2" class="ta">Total amount</th></tr></thead>
            <tbody>
            <tr><th rowspan="6">Alterna-<br>tive<br>Mini-<br>mum<br>Tax<br>(AMT)<br>Items</th><td class="l"><b>15a</b><div><span>Post-1986 depreciation adjustment</span></div></td><th>15a</th><td></td></tr>
            <tr><td class="l"><b>b</b><div><span>Adjusted gain or loss</span></div></td><th>15b</th><td></td></tr>
            <tr><td class="l"><b>c</b><div><span>Depletion (other than oil and gas)</span></div></td><th>15c</th><td></td></tr>
            <tr><td class="l"><b>d</b><div><span>Oil, gas, and geothermal properties – gross income</span></div></td><th>15d</th><td></td></tr>
            <tr><td class="l"><b>e</b><div><span>Oil, gas, and geothermal properties – deductions</span></div></td><th>15e</th><td></td></tr>
            <tr class="end"><td class="l"><b>f</b><div><span>Other AMT items (attach statement)</span></div></td><th>15f</th><td></td></tr>
            <tr><th rowspan="5">Items<br>Affec-<br>ting<br>Share-<br>holder<br>Basis</th><td class="l"><b>16a</b><div><span>Tax-exempt interest income</span></div></td><th>16a</th><td></td></tr>
            <tr><td class="l"><b>b</b><div><span>Other tax-exempt income</span></div></td><th>16b</th><td></td></tr>
            <tr><td class="l"><b>c</b><div><span>Nondeductible expenses</span></div></td><th>16c</th><td></td></tr>
            <tr><td class="l"><b>d</b><div><span>Distributions (attach stmt if required) (see instrs)</span></div></td><th>16d</th><td></td></tr>
            <tr class="end"><td class="l"><b>e</b><div><span>Repayment of loans from shareholders</span></div></td><th>16e</th><td></td></tr>
            <tr><th rowspan="5">Other<br>Infor-<br>mation</th><td class="l"><b>17a</b><div><span>Investment income</span></div></td><th>17a</th><td></td></tr>
            <tr><td class="l"><b>b</b><div><span>Investment expenses</span></div></td><th>17b</th><td></td></tr>
            <tr><td class="l"><b>c</b><div><span>Dividend distributions paid from accumulated earnings and profits</span></div></td><th>17c</th><td></td></tr>
            <tr><td class="l"><b>d</b><div class="nd"><span>Other items and amounts</span></div></td><th class="g" rowspan="2"></th><td class="g" rowspan="2"></td></tr>
            <tr class="end"><td class="l"><b></b><div class="nd three"><span>(attach statement)</span><a class="wks" href="#">WKS</a><a href="#">See Statement 3</a></div></td></tr>
            <tr class="rec end"><th>Recon-<br>ciliation</th><td class="l"><b>18&nbsp;&nbsp;</b><section><p><strong>Income (loss) reconciliation.</strong> Combine the amounts on lines 1 through 10 in the far right column.</p><div><span>From the result, subtract the sum of the amounts on lines 11 through 12d and 14p</span></div></section></td><th>18</th><td>57,720.</td></tr>
            </tbody>
          </table>
          <table class="sl">
            <colgroup><col class="n"><col><col class="v"><col class="v"><col class="v"><col class="v"></colgroup>
            <thead><tr><th colspan="2"><div><b class="tag">Schedule L</b><span>Balance Sheets per Books</span></div></th><td colspan="2">Beginning of tax year</td><td colspan="2">End of tax year</td></tr>
            <tr><th colspan="2" class="as">Assets</th><th>(a)</th><th>(b)</th><th>(c)</th><th>(d)</th></tr></thead>
            <tbody>
            <tr><th>1<i></i></th><td class="l"><div><span>Cash</span></div></td><td class="g"></td><td></td><td class="g"></td><td>58,272.</td></tr>
            <tr><th>2<i>a</i></th><td class="l"><div><span>Trade notes and accounts receivable</span></div></td><td></td><td class="g"></td><td>58,276.</td><td class="g"></td></tr>
            <tr><th><i>b</i></th><td class="l"><div><span>Less allowance for bad debts</span></div></td><td></td><td></td><td>58,284.</td><td>-8.</td></tr>
            <tr><th>3<i></i></th><td class="l"><div><span>Inventories</span></div></td><td class="g"></td><td></td><td class="g"></td><td>58,288.</td></tr>
            <tr><th>4<i></i></th><td class="l"><div><span>U.S. government obligations</span></div></td><td class="g"></td><td></td><td class="g"></td><td>58,292.</td></tr>
            <tr><th>5<i></i></th><td class="l"><div><span>Tax-exempt securities (see instructions)</span></div></td><td class="g"></td><td></td><td class="g"></td><td>58,296.</td></tr>
            <tr><th>6<i></i></th><td class="l nar"><div><span>Other current assets (attach stmt)</span><a href="#">See St 4</a></div></td><td class="g"></td><td></td><td class="g"></td><td>408,258.</td></tr>
            <tr><th>7<i></i></th><td class="l"><div><span>Loans to shareholders</span></div></td><td class="g"></td><td></td><td class="g"></td><td>58,362.</td></tr>
            <tr><th>8<i></i></th><td class="l"><div><span>Mortgage and real estate loans</span></div></td><td class="g"></td><td></td><td class="g"></td><td>58,366.</td></tr>
            <tr><th>9<i></i></th><td class="l nar"><div><span>Other investments (attach statement)</span><a href="#">See St 5</a></div></td><td class="g"></td><td></td><td class="g"></td><td>58,390.</td></tr>
            <tr><th>10<i>a</i></th><td class="l"><div><span>Buildings and other depreciable assets</span></div></td><td></td><td class="g"></td><td>980,850.</td><td class="g"></td></tr>
            <tr><th><i>b</i></th><td class="l"><div><span>Less accumulated depreciation</span></div></td><td></td><td></td><td>582,206.</td><td>398,644.</td></tr>
            <tr><th>11<i>a</i></th><td class="l"><div><span>Depletable assets</span></div></td><td></td><td class="g"></td><td>582,210.</td><td class="g"></td></tr>
            <tr><th><i>b</i></th><td class="l"><div><span>Less accumulated depletion</span></div></td><td></td><td></td><td>582,214.</td><td>-4.</td></tr>
            <tr><th>12<i></i></th><td class="l"><div><span>Land (net of any amortization)</span></div></td><td class="g"></td><td></td><td class="g"></td><td>582,218.</td></tr>
            <tr><th>13<i>a</i></th><td class="l"><div><span>Intangible assets (amortizable only)</span></div></td><td></td><td class="g"></td><td>582,222.</td><td class="g"></td></tr>
            <tr><th><i>b</i></th><td class="l"><div><span>Less accumulated amortization</span></div></td><td></td><td></td><td>582,226.</td><td>-4.</td></tr>
            <tr><th>14<i></i></th><td class="l"><div><span>Other assets (attach stmt)</span><a href="#">See St 6</a></div></td><td class="g"></td><td></td><td class="g"></td><td>1,720,722.</td></tr>
            <tr><th>15<i></i></th><td class="l"><div><span>Total assets</span></div></td><td class="g"></td><td>0.</td><td class="g"></td><td>3,518,092.</td></tr>
            <tr class="liab"><th colspan="2">Liabilities and Shareholders' Equity</th><td class="g"></td><td></td><td class="g"></td><td></td></tr>
            <tr><th>16<i></i></th><td class="l"><div><span>Accounts payable</span></div></td><td class="g"></td><td></td><td class="g"></td><td>58,462.</td></tr>
            <tr><th>17<i></i></th><td class="l nar"><div><span>Mortgages, notes, bonds payable in less than 1 year</span></div></td><td class="g"></td><td></td><td class="g"></td><td>58,466.</td></tr>
            <tr><th>18<i></i></th><td class="l nar"><div><span>Other current liabilities (attach stmt)</span><a href="#">See St 7</a></div></td><td class="g"></td><td></td><td class="g"></td><td>351,048.</td></tr>
            <tr><th>19<i></i></th><td class="l"><div><span>Loans from shareholders</span></div></td><td class="g"></td><td></td><td class="g"></td><td>58,562.</td></tr>
            <tr><th>20<i></i></th><td class="l nar"><div><span>Mortgages, notes, bonds payable in 1 year or more</span></div></td><td class="g"></td><td></td><td class="g"></td><td>58,572.</td></tr>
            <tr><th>21<i></i></th><td class="l nar"><div><span>Other liabilities (attach statement)</span><a href="#">See St 8</a></div></td><td class="g"></td><td></td><td class="g"></td><td>1,752,606.</td></tr>
            <tr><th>22<i></i></th><td class="l"><div><span>Capital stock</span></div></td><td class="g"></td><td></td><td class="g"></td><td>584,266.</td></tr>
            <tr><th>23<i></i></th><td class="l"><div><span>Additional paid-in capital</span></div></td><td class="g"></td><td></td><td class="g"></td><td>584,270.</td></tr>
            <tr><th>24<i></i></th><td class="l"><div><span>Retained earnings</span><a class="wks" href="#">WKS</a></div></td><td class="g"></td><td></td><td class="g"></td><td>584,294.</td></tr>
            <tr><th>25<i></i></th><td class="l nar"><div><span>Adjustments to shareholders' equity (att stmt)</span></div></td><td class="g"></td><td></td><td class="g"></td><td></td></tr>
            <tr><th>26<i></i></th><td class="l"><div><span>Less cost of treasury stock</span></div></td><td class="g"></td><td></td><td class="g"></td><td>584,312.</td></tr>
            <tr><th>27<i></i></th><td class="l"><div><span>Total liabilities and shareholders' equity</span></div></td><td class="g"></td><td>0.</td><td class="g"></td><td>3,506,234.</td></tr>
            </tbody>
          </table>
          <svg class="cursor" width="14" height="20" viewBox="0 0 14 20"><path d="M1 1V15L4.500 12 7 18 9.500 17 7 11H12Z" fill="#fff" stroke="#777"/></svg>
        </div>
        <div class="vtrack"><svg width="10" height="10"><use href="#up"/></svg><i></i><svg width="10" height="10"><use href="#down"/></svg></div>
        <div class="mark"><p>Activate Windows</p><p class="sm">Go to Settings to activate Windows.</p></div>
      </div>
    </div>
  </div>
  <nav class="ftabs"><a href="#" class="on">1120S</a><a href="#">8879-S</a><a href="#">Statements</a><a href="#">Letter</a><a href="#">K1 Letter</a><a href="#">Slip Sheets</a><a href="#">Invoice</a><a href="#">Tax Summary</a><a href="#">Diagnostics</a><a href="#">Override Diagnostics</a><a href="#">General Info.</a><a href="#">Worksheets</a><a href="#">Basis Sch</a><a href="#">e-file Instructions</a></nav>
  <div class="dock">
    <a href="#" class="live"><svg width="17" height="16" viewBox="0 0 17 16"><circle cx="5" cy="4" r="3" fill="#f2b632"/><circle cx="12" cy="4" r="3" fill="#7cc4e8"/><rect x="1" y="6" width="7" height="7" rx="2" fill="#3f9a3a"/><rect x="9" y="6" width="7" height="6" rx="2" fill="#e8a020"/><rect x="5" y="9" width="7" height="7" rx="2" fill="#f6c83a"/></svg>Live Community</a>
    <a href="#"><svg width="15" height="15" viewBox="0 0 15 15"><circle cx="7.500" cy="7.500" r="6.500" fill="#e6f2ff" stroke="#4b83c4"/><path d="M5.500 6Q5.500 4 7.500 4T9.500 6Q9.500 7.500 7.500 8.500V9.500M7.500 10.500V12" stroke="#2b4fa0" fill="none" stroke-width="1.300"/></svg>Help</a>
    <span>Open</span><i></i>
  </div>
  <div class="status">
    <i></i><span>DEMOLACE Calculated</span><span class="eng">Engine Done</span><b></b><b></b><b></b>
    <a class="tips" href="#"><svg width="23" height="22" viewBox="0 0 23 22"><rect x="1" y="1" width="21" height="20" fill="#fff" stroke="#000" stroke-width="2"/><path d="M5 5 18 17M18 5 5 17" stroke="#000" stroke-width="1.600"/></svg>Click Here to Show Quick Tips</a>
  </div>
  <footer class="task">
    <button class="start" aria-label="Start"><svg width="16" height="18" viewBox="0 0 16 18"><path d="M0 3 7 2V8.500H0ZM8 1.800 16 1V8.500H8ZM0 9.500H7V16L0 15ZM8 9.500H16V17L8 16Z" fill="#111"/></svg></button>
    <label class="sbox"><svg width="17" height="20" viewBox="0 0 17 20"><circle cx="10" cy="7" r="5.500" fill="none" stroke="#222" stroke-width="1.300"/><path d="M6.500 11.500 1 18" stroke="#222" stroke-width="1.400"/></svg><input placeholder="Type here to search" aria-label="Type here to search"></label>
    <div class="tbtn"><svg viewBox="0 0 18 18"><circle cx="9" cy="9" r="6.500" fill="none" stroke="#111" stroke-width="1.800"/></svg></div>
    <div class="tbtn"><svg viewBox="0 0 18 18"><path d="M3 5.500H12V12.500H3ZM2 2.500H13M2 15.500H13M16 2V4M16 6V16" fill="none" stroke="#222" stroke-width="1.300"/></svg></div>
    <div class="tbtn on"><b class="coin">20</b></div>
    <div class="tbtn"><svg viewBox="0 0 22 22"><rect width="22" height="22" rx="2" fill="#0c5aa6"/><text x="12" y="18" text-anchor="middle" class="dol">$</text></svg></div>
    <div class="tbtn"><svg viewBox="0 0 22 22"><circle cx="11" cy="11" r="11" fill="#0d62b8"/><path d="M7 5H11Q16 5 16 11T11 17H7Z" fill="none" stroke="#fff" stroke-width="2.600"/><circle cx="17" cy="17" r="4" fill="#4aa3e8"/></svg></div>
    <div class="chev"><svg width="11" height="11"><use href="#up"/></svg><svg width="11" height="11"><use href="#down"/></svg></div>
    <div class="tray">
      <svg width="22" height="22" viewBox="0 0 22 22"><circle cx="10" cy="11" r="8.500" fill="#f7a823"/><circle cx="12" cy="9" r="6" fill="#fcd34a"/><path d="M8 18A3 3 0 0 1 9 13 4.500 4.500 0 0 1 17 13 2.800 2.800 0 0 1 18 18Z" fill="#e6eef6"/></svg><span>55°F</span>
      <svg width="12" height="12"><use href="#up"/></svg>
      <svg viewBox="0 0 16 16"><rect x="5" y="4" width="8" height="8" rx="2"/><path d="M6 1.500H12M6 14.500H12"/></svg>
      <svg viewBox="0 0 16 16"><path d="M1 4 9 2V14L1 13ZM9 4H14V12"/><circle cx="12" cy="12" r="3.500" fill="#e22" stroke="none"/></svg>
      <svg viewBox="0 0 16 16"><path d="M5 5H15V12H5Z" fill="#222"/><path d="M1 3V7H4V3M2.500 7V12H5"/></svg>
      <svg viewBox="0 0 16 16"><path d="M4 3H15V11H4ZM9 11V14M6 14.500H13M1 2V8H4"/></svg>
      <svg viewBox="0 0 16 16"><path d="M1 6H3L7 3V13L3 10H1ZM9 6Q10 8 9 10M11 4.500Q13 8 11 11.500M13 3Q16 8 13 13"/></svg>
      <time>12:08 PM<br>2/21/2022</time>
      <svg class="note" viewBox="0 0 16 18"><path d="M1 2H15V14H10L10 17 7 14H1Z"/></svg>
    </div>
  </footer>
</section>
</main>
</body>
</html>
```
FILE: styles.css
```css
* { box-sizing: border-box; }
body { margin: 0; height: 100vh; display: flex; flex-direction: column; overflow: hidden; font: 12px/16px "Liberation Sans", Arial, sans-serif; color: #111; background: #b9c2c8; }
a { color: inherit; text-decoration: none; }
button, input { font: inherit; color: inherit; border: 0; padding: 0; margin: 0; background: none; border-radius: 0; }
h1, h2, h3, h4, p, ul { margin: 0; padding: 0; font-weight: inherit; list-style: none; }
svg { flex: none; display: block; }
.defs { position: absolute; }
.wl { color: #fff; }

/* macOS menu bar */
.macbar { flex: none; height: 24px; display: grid; grid-template-columns: 1fr 1fr; align-items: center; background: linear-gradient(90deg, #ced4d7, #dbe0dd 45%, #c9d5e2 75%, #dcdfe2); border-bottom: 1px solid #a3abb0; font-family: Inter, sans-serif; font-size: 12px; }
.mac-menu { display: flex; align-items: center; gap: 19px; padding-left: 19px; }
.mac-status { display: flex; align-items: center; justify-content: space-between; padding: 0 17px 0 13px; }
.mac-status svg { width: 19px; height: 19px; }
.mac-apps { display: flex; gap: 15px; }
.mac-stats { display: flex; gap: 12px; font-size: 11px; color: #444; }
.mac-stats span { width: 24px; text-align: right; }
.mac-stats em { font-style: normal; color: #e02a2a; }
.mac-sys { display: flex; gap: 15px; }
.macbar time { white-space: nowrap; }

.desk { flex: 1; min-height: 0; display: grid; grid-template-columns: 1fr 1fr; }
.desk > section { min-width: 0; min-height: 0; display: flex; flex-direction: column; overflow: hidden; }

/* browser */
.chrome { font-family: Inter, sans-serif; background: #dadada; border-radius: 8px 8px 0 0; }
.tabstrip { flex: none; height: 39px; display: flex; align-items: center; background: #e2e4ea; padding: 0 16px 0 18px; color: #555; font-size: 11px; }
.light { width: 13px; height: 13px; margin-right: 6px; border-radius: 50%; background: #cdced2; border: 1px solid #c2c3c7; }
.btab { align-self: flex-end; height: 32px; width: 224px; display: flex; align-items: center; padding: 0 10px; }
.btab.on { margin-left: 13px; background: #fff; border-radius: 8px 8px 0 0; }
.btab .fav { margin-right: 8px; }
.btab span { flex: 1; white-space: nowrap; }
.btab .fade { mask-image: linear-gradient(90deg, #000 85%, transparent); }
.cal-day { font: bold 8px "Liberation Sans", sans-serif; fill: #2b6de0; }
.newtab { width: 40px; height: 20px; border-left: 1px solid #aaa; font-size: 22px; line-height: 18px; color: #444; }
.tabsearch { margin-left: auto; }
.urlrow { flex: none; height: 34px; display: flex; align-items: center; background: #fff; }
.navs { display: flex; gap: 13px; width: 102px; padding-left: 11px; }
.navs svg { width: 18px; height: 18px; }
.omni { width: 636px; height: 26px; border-radius: 13px; background: #f0f1f3; display: flex; align-items: center; gap: 14px; padding: 0 8px 0 11px; }
.omni input { flex: 1; margin-left: -4px; font-size: 13px; color: #333; outline: 0; }
.exts { flex: 1; display: flex; justify-content: space-between; align-items: center; padding: 0 13px 0 13px; }
.exts svg, .exts i { width: 16px; height: 16px; }
.exts .me { width: 21px; height: 21px; margin: 0 -3px; }
.exts i { width: 22px; height: 22px; margin: 0 -3px; border-radius: 50%; box-shadow: 0 1px 2px #888; text-align: center; font: italic bold 14px/22px "Liberation Serif", serif; }
.marks { flex: none; height: 31px; display: flex; align-items: center; gap: 15px; padding: 0 13px 4px 13px; background: #fff; font-size: 11px; color: #5a5d62; white-space: nowrap; }
.marks a { display: flex; align-items: center; gap: 6px; }
.marks svg { width: 16px; height: 14px; }
.marks b { margin-left: auto; }
.marks .other { border-left: 1px solid #bbb; padding-left: 10px; margin-left: -6px; }

/* app chrome */
.apphead { flex: none; height: 63px; display: flex; align-items: center; padding: 0 16px 0 13px; background: #14111a; color: #14111a; }
.apphead strong { margin-left: 5px; font: 500 18px/20px Roboto, sans-serif; color: #fff; }
.apphead sub { align-self: center; margin: 14px 18px 0 0; font: bold 10px/12px "Open Sans", sans-serif; color: #78a9ff; }
.apphead a { margin-right: 14px; font: 13px/18px "Liberation Sans", sans-serif; color: #777; }
.apphead .lit { color: #fff; }
.apphead .q { margin: 0 15px 0 auto; }
.caret { border: 3px solid transparent; border-top-color: #fff; border-bottom: 0; margin: -8px 0 0 3px; }
.titlebar { flex: none; height: 49px; display: flex; align-items: center; padding-left: 5px; }
.menu { width: 59px; height: 31px; margin: -6px 10px 0 0; background: #1f5bd6; color: #fff; font: 13px/16px "Liberation Sans", sans-serif; border-radius: 2px; display: flex; align-items: center; justify-content: center; gap: 3px; }
.menu i { border: 3px solid transparent; border-left-color: #fff; border-right: 0; }
.titlebar h1 { font: bold 20px/24px "Liberation Sans", sans-serif; color: #222; }
.appbody { flex: 1; min-height: 0; display: flex; position: relative; padding-left: 8px; font-family: "Liberation Sans", sans-serif; }
.panel { flex: 1; min-width: 0; overflow: hidden; background: #f2f2f2; padding: 18px 94px 0 9px; }
.ptabs { display: flex; height: 46px; border-bottom: 2px solid #fff; margin-right: 40px; font-size: 23px; line-height: 48px; }
.ptabs a { padding: 0 18px; height: 45px; white-space: nowrap; }
.ptabs .on { background: #fff; border-bottom: 4px solid #1f5bd6; color: #444; }
.paper { margin-top: 7px; background: #fff; padding: 23px 40px 0; }
.download { width: 91px; height: 31px; margin-left: 5px; display: flex; align-items: center; justify-content: center; gap: 3px; background: #a6c8ff; border-radius: 2px; font-size: 13px; }
.paper h2 { margin-top: 58px; text-align: center; font: bold 19px/24px "Liberation Sans", sans-serif; }
.paper p { text-align: center; font-size: 14px; line-height: 18px; }
.paper h2, .paper p { width: 316px; margin-left: 318px; }
.income { margin-top: 35px; border-collapse: separate; border-spacing: 5px 0; table-layout: fixed; width: 683px; font-size: 11px; line-height: 14px; }
.c0 { width: 275px; } .c1 { width: 92px; } .c2 { width: 67px; } .c3 { width: 73px; } .c4 { width: 74px; }
.income th, .income td { padding: 0 3px 0 0; height: 17px; text-align: right; white-space: nowrap; }
.income tbody th { font-weight: normal; text-align: left; padding-left: 38px; }
.income thead th { height: 34px; padding: 0 0 4px; text-align: center; vertical-align: bottom; font-size: 13px; font-weight: normal; border-bottom: 1px solid #333; }
.income .big th { height: 17px; padding-left: 0; font-size: 16px; font-weight: bold; }
.income .h th { padding-left: 11px; font-size: 13px; font-weight: bold; }
.income .e td { border-bottom: 1px solid #222; }
.income .s td { height: 18px; padding-top: 3px; font-weight: bold; }
.income .dbl td { height: 20px; border-bottom: 3px solid #000; }
.income .tot td { height: 22px; padding-top: 2px; }
.income .tot th { padding-left: 3px; font-size: 13px; font-weight: bold; }
.income .gap td { height: 30px; }
.income .w th { padding-left: 11px; }
.income .w th::before { content: "!"; display: inline-block; width: 27px; color: #e01b1b; font-weight: bold; }
.bar { width: 12px; background: #e6e6e6; border: 1px solid #c8c8c8; border-width: 0 1px; }
.bar i { display: block; height: 72%; background: #c6c6c6; border-radius: 6px; border: 1px solid #aaa; }
.peek { width: 28px; padding: 18px 0 0 18px; display: flex; flex-direction: column; gap: 8px; background: #dadada; }
.peek b { height: 45px; background: #f4f4f4; border-bottom: 3px solid #1f5bd6; }
.peek span { height: 80px; background: #f4f4f4; }
.peek u { height: 356px; margin-top: 54px; background: #c2c2c2; }
.bar.slim { width: 11px; margin-right: 7px; background: #d4d4d4; border-radius: 6px; }
.help { position: absolute; right: 38px; bottom: 38px; width: 56px; height: 56px; border-radius: 50%; background: #1f5bd6; color: #fff; font: 30px/56px Inter, sans-serif; box-shadow: 0 2px 6px #888; }
.shelf { flex: none; height: 54px; display: flex; align-items: center; background: #fff; border-top: 1px solid #ccc; padding-right: 12px; color: #3c4043; }
.shelf div { width: 219px; height: 43px; display: flex; align-items: center; gap: 12px; padding-left: 18px; border-right: 1px solid #ccc; font-size: 12px; white-space: nowrap; }
.shelf div span { flex: 1; }
.shelf div button { width: 33px; height: 36px; margin-right: 5px; display: grid; place-items: center; border-radius: 3px; }
.shelf .on { background: #e6e6e6; }
.all { margin: 0 14px 0 auto; width: 72px; height: 30px; border: 1px solid #f2f2f2; border-radius: 3px; font-size: 11px; }

/* virtual machine window */
.vm { background: #ebebeb; font-size: 11px; line-height: 14px; }
.vmtitle { flex: none; height: 36px; display: grid; grid-template-columns: 19px 19px 19px 1fr 1fr 1fr; align-items: center; padding: 0 4px 2px 12px; background: #f0eeec; border-radius: 8px 8px 0 0; border-top: 1px solid #ccc; font-size: 15px; color: #444; }
.vmtitle i { width: 12px; height: 12px; border-radius: 50%; }
.vmtitle .r { background: #fb4e48; } .vmtitle .y { background: #fbb02a; } .vmtitle .g { background: #1fb62f; } .vmtitle .b { background: #3b9cf0; }
.vmtitle > span { text-align: center; margin-right: 62px; }
.vmicons { display: flex; justify-content: flex-end; gap: 4px; }
.vmicons svg { width: 20px; height: 20px; fill: none; stroke: #777; stroke-width: 1.300; }
.wtitle { flex: none; height: 21px; display: flex; align-items: center; gap: 5px; background: #fff; padding: 0 17px 0 2px; font: 11px/16px "Open Sans", sans-serif; }
.coin { flex: none; width: 14px; height: 14px; border-radius: 50%; background: #c08028; color: #f6e2b0; text-align: center; font: bold 8px/14px "Liberation Sans", sans-serif; }
.wtitle div { margin-left: auto; display: flex; gap: 31px; }
.wtitle svg { width: 12px; height: 12px; fill: none; stroke: #222; }
.wmenu { flex: none; height: 20px; display: flex; align-items: center; gap: 10px; padding-left: 5px; font-size: 10px; }
.wtools { flex: none; height: 33px; display: flex; align-items: center; border-top: 1px solid #999; border-bottom: 1px solid #999; padding-left: 2px; }
.wtools button { width: 29px; height: 28px; display: grid; place-items: center; }
.wtools .wide ~ button { width: 30px; }
.wtools .last ~ button { width: 29px; }
.wtools .on { border: 1px solid #aaa; border-right-color: #fff; background: #f2f2f2; }
.wtools svg { width: 24px; height: 24px; }
.wtools span { width: 1px; height: 25px; margin: 0 2px 0 3px; background: #999; }
.wtools span:first-child { margin-left: 1px; }
.wtools .wide { margin-right: 12px; }
.ef { font: bold 17px "Liberation Sans", sans-serif; fill: #fff; }
.rep { font: bold 10px "Liberation Sans", sans-serif; fill: #1b7fc4; }
.wtabs { flex: none; height: 15px; display: flex; padding-left: 5px; font-size: 10px; }
.wtabs a { position: relative; padding: 0 9px 0 8px; line-height: 15px; background: #fff; border-top: 1px solid #555; white-space: nowrap; }
.wtabs a::after, .ftabs a::after, .dock a::after { content: ""; position: absolute; top: 0; bottom: 0; right: -3px; width: 6px; background: inherit; border-right: 1px solid #444; transform: skewX(20deg); }
.wtabs a::after { z-index: 1; }
.wtabs .on { background: #8f8f8f; color: #eee; border-color: #8f8f8f; }
.band { flex: none; height: 24px; display: flex; align-items: center; padding: 0 4px; background: #8f8f8f; border-top: 1px solid #666; }
.band h3 { flex: 1; font-size: 14px; font-weight: bold; color: #111; }
.band b { margin-left: 5px; font-size: 12px; color: #f2f2f2; }
.band i { border: 3px solid transparent; border-top: 5px solid #eee; border-bottom: 0; margin: 0 14px 0 4px; }
.band input { width: 165px; height: 19px; background: #fff; border: 1px solid #666; margin-right: 3px; }
.band button { width: 89px; height: 19px; background: #ff9a0a; border: 1px solid #7a4a00; font-size: 14px; }
.work { flex: 1; min-height: 0; display: flex; padding: 4px 4px 2px 2px; }
.work aside { width: 261px; margin-right: 8px; display: flex; flex-direction: column; gap: 5px; font-weight: bold; }
.work aside section { background: #fff; border: 1px solid #999; border-width: 1px 1px 1px 0; }
.state { flex: none; height: 147px; } .forms { flex: 1; } .pages { flex: none; height: 315px; }
.work h4 { height: 19px; display: flex; align-items: center; padding-left: 2px; background: #ebebeb; border-bottom: 1px solid #999; font-weight: bold; font-size: 11px; }
.work h4 label { margin: 0 13px 0 auto; display: flex; align-items: center; gap: 6px; font-weight: normal; }
.work h4 input { appearance: none; width: 11px; height: 11px; background: #fff; border: 1px solid #888; border-width: 1px 0 0 1px; }
.work ul { display: grid; grid-auto-rows: 1fr; }
.forms ul { height: 171px; } .pages ul { height: 61px; }
.work li { line-height: 12px; padding-left: 5px; }
.work li.on { background: #ebebeb; }
.viewer { flex: 1; min-width: 0; display: flex; flex-direction: column; border-left: 1px solid #777; }
.vbar { flex: none; height: 20px; display: flex; align-items: center; gap: 5px; padding: 0 3px; background: #7fa6cb; border-bottom: 1px solid #888; }
.vbar button { width: 17px; height: 17px; background: #fff; border: 2px solid #14149a; display: grid; place-items: center; }
.vbar svg { width: 9px; height: 9px; stroke: #000; }
.vbar .txt { display: block; width: 59px; font-size: 10px; line-height: 13px; border-width: 1px 2px 2px 1px; text-align: center; white-space: nowrap; }
.vbar .first { width: 49px; margin-left: auto; border-color: #333; }
.vbar i { display: inline-block; margin: 0 0 2px 4px; border: 3px solid transparent; border-top: 4px solid #000; border-bottom: 0; }
.vscroll { flex: 1; min-height: 0; position: relative; display: flex; overflow: hidden; background: #fff; border-bottom: 1px solid #666; }
.sheet { position: relative; flex: 1; min-width: 0; padding: 8px 14px 0 14px; font-size: 14px; line-height: 16px; color: #333; }
.formno { display: flex; justify-content: space-between; height: 19px; line-height: 20px; }
.sheet b, .sheet th { color: #111; }
.sheet table { width: 100%; border-collapse: collapse; table-layout: fixed; }
.sheet td, .sheet th { padding: 0; }
.sk { height: 369px; border-top: 2px solid #111; }
.sl { height: 655px; border-top: 2px solid #111; border-bottom: 1px solid #111; }
.k1 { width: 59px; } .k3 { width: 37px; } .k4 { width: 140px; } .n { width: 35px; } .v { width: 140px; }
.sheet thead div { display: flex; align-items: center; height: 100%; }
.tag { width: 107px; padding-left: 3px; background: #b8b8b8; border: 1px solid #333; text-align: left; font-size: 16px; line-height: 16px; }
.sheet thead span { padding-left: 16px; }
.sk thead span { font-size: 16px; }
.sk thead i { font-weight: normal; }
.sk thead th { height: 18px; border-bottom: 1px solid #111; }
.sk .ta { border-left: 1px solid #111; text-align: center; }
.sk tbody th, .sk tbody td { border-left: 1px solid #111; border-bottom: 1px solid #111; }
.sk tbody .l { border-bottom: 0; }
.sk tbody th:first-child { border-left: 0; text-align: left; vertical-align: top; padding-top: 4px; font-size: 13px; line-height: 13px; }
.sk tbody .end td, .sk tbody .end th { border-bottom: 1px solid #111; }
.sk tbody th { font-size: 13px; }
.sk tbody td:last-child { text-align: right; }
.sk .l b { float: left; width: 31px; margin-right: 4px; text-align: right; }
.l div { display: flex; height: 16px; background: radial-gradient(circle, #777 40%, transparent 60%) 0 12px / 5px 2px repeat-x; }
.sk .l div { margin-right: 7px; }
.sk .l .nd { background: none; }
.sk .l b + div { margin-left: 35px; }
.l span { background: #fff; padding-right: 2px; white-space: nowrap; }
.l a { margin: 0 10px 0 auto; font: 16px/15px "Liberation Mono", monospace; color: #1c8a2a; border-bottom: 1px solid #1c8a2a; height: 16px; white-space: nowrap; }
.l .wks { margin-right: 4px; font: bold 15px/14px "Liberation Sans", sans-serif; color: #0a7a14; border-bottom-width: 2px; }
.sk .three a { margin: 0 50px 0 0; }
.sk .three span { width: 187px; }
.sk .three .wks { margin-right: 179px; }
.sk td:last-child, .sl tbody td { font-size: 16px; font-family: "Liberation Mono", monospace; color: #2a2ac4; }
.sk td.l:last-child { font: 14px/16px "Liberation Sans", sans-serif; color: #333; text-align: left; }
.rec { height: 40px; }
.sk .rec th:last-of-type { vertical-align: bottom; padding-bottom: 2px; }
.sk .rec td:last-child { vertical-align: bottom; padding: 0 0 2px 0; }
.rec section { margin-left: 35px; }
.rec p { font-size: 12px; white-space: nowrap; }
.nar div span { font-size: 11px; }
.sheet .g { background: #b8b8b8; }
.sl thead td, .sl thead th { height: 18px; text-align: center; border-left: 1px solid #111; border-bottom: 1px solid #111; }
.sl thead th:first-child { border-left: 0; }
.sl thead .as { border-bottom: 0; }
.sl tbody th { text-align: right; vertical-align: middle; }
.sl th i { display: inline-block; width: 12px; padding-right: 3px; font-style: normal; text-align: right; }
.sl tbody td { text-align: right; border: 1px solid #111; border-right: 0; vertical-align: bottom; line-height: 16px; }
.sl tbody .l { border: 0; padding-right: 3px; font: 14px/16px "Liberation Sans", sans-serif; color: #333; text-align: left; vertical-align: middle; }
.sl .liab th { text-align: center; font-size: 12px; }
.sl .liab td { border-bottom: 0; }
.sl .liab + tr td { border-top: 0; }
.cursor { position: absolute; left: 452px; top: 440px; }
.vtrack { width: 18px; display: flex; flex-direction: column; align-items: center; gap: 5px; padding: 6px 0; background: #f0f0f0; }
.vtrack i { width: 15px; height: 915px; background: #c4c4c4; margin-bottom: auto; }
.mark { position: absolute; right: 46px; bottom: -8px; width: 214px; color: #88888899; font-size: 18px; line-height: 24px; white-space: nowrap; }
.mark .sm { font-size: 13px; line-height: 18px; }
.ftabs { flex: none; height: 21px; display: flex; align-items: flex-start; background: #fff; padding: 0 334px 0 4px; font-size: 10px; }
.ftabs a { position: relative; height: 17px; padding: 2px 0 0; background: #f2f2f2; border-bottom: 1px solid #555; white-space: nowrap; flex: auto; text-align: center; }
.ftabs a::after { right: 0; width: 1px; transform: skewX(-20deg); }
.ftabs .on { background: #fff; }
.dock { flex: none; height: 26px; display: flex; align-items: flex-end; padding: 0 4px 2px 5px; border-top: 1px solid #bbb; font-size: 11px; }
.dock a { position: relative; height: 18px; display: flex; align-items: center; gap: 5px; padding: 0 6px; background: #fff; border-top: 1px solid #777; color: #666; }
.dock .live { background: #5b7df5; color: #e8ecff; margin-right: 2px; }
.dock span { margin: 0 2px 4px auto; }
.dock i { border: 4px solid transparent; border-bottom: 6px solid #17a32a; border-top: 0; margin-bottom: 11px; }
.status { position: relative; flex: none; height: 16px; display: flex; align-items: center; border-top: 1px solid #aaa; padding-left: 2px; font-size: 10px; }
.status i { width: 80px; height: 13px; background: #0667d8; margin-right: 6px; }
.status span { flex: none; width: 206px; }
.status .eng { width: 100px; margin: 0 auto 0 464px; }
.status b { width: 22px; height: 15px; border-left: 1px solid #bbb; }
.status .tips { position: absolute; left: 442px; top: -8px; width: 317px; height: 23px; display: flex; align-items: center; gap: 8px; background: #fff; font-size: 17px; color: #1a50c8; }
.task { flex: none; height: 38px; display: flex; align-items: stretch; background: #c3dfea; }
.start { width: 45px; display: grid; place-items: center; }
.sbox { width: 321px; display: flex; align-items: center; gap: 10px; padding-left: 11px; background: #fff; font: 13px/20px "Open Sans", sans-serif; }
.sbox input { flex: 1; outline: 0; }
.sbox input::placeholder { color: #444; }
.tbtn { width: 46px; display: grid; place-items: center; }
.tbtn svg, .tbtn .coin { width: 21px; height: 21px; line-height: 21px; font-size: 10px; }
.tbtn.on { background: #eaf3fb; border-bottom: 2px solid #1768c8; }
.dol { font: bold 20px "Liberation Sans", sans-serif; fill: #fff; }
.chev { margin-left: auto; width: 16px; display: flex; flex-direction: column; justify-content: space-between; padding: 3px 0; }
.tray { width: 340px; display: flex; align-items: center; gap: 6px; padding-left: 26px; background: #cde2f0; font: 11px/17px "Open Sans", sans-serif; }
.tray svg { width: 17px; height: 17px; fill: none; stroke: #222; }
.tray svg:first-child { width: 22px; height: 22px; stroke: none; margin-right: -1px; }
.tray span { margin-right: 12px; }
.tray time { width: 60px; text-align: center; margin-left: 6px; }
.tray .note { width: 17px; height: 19px; }
```
